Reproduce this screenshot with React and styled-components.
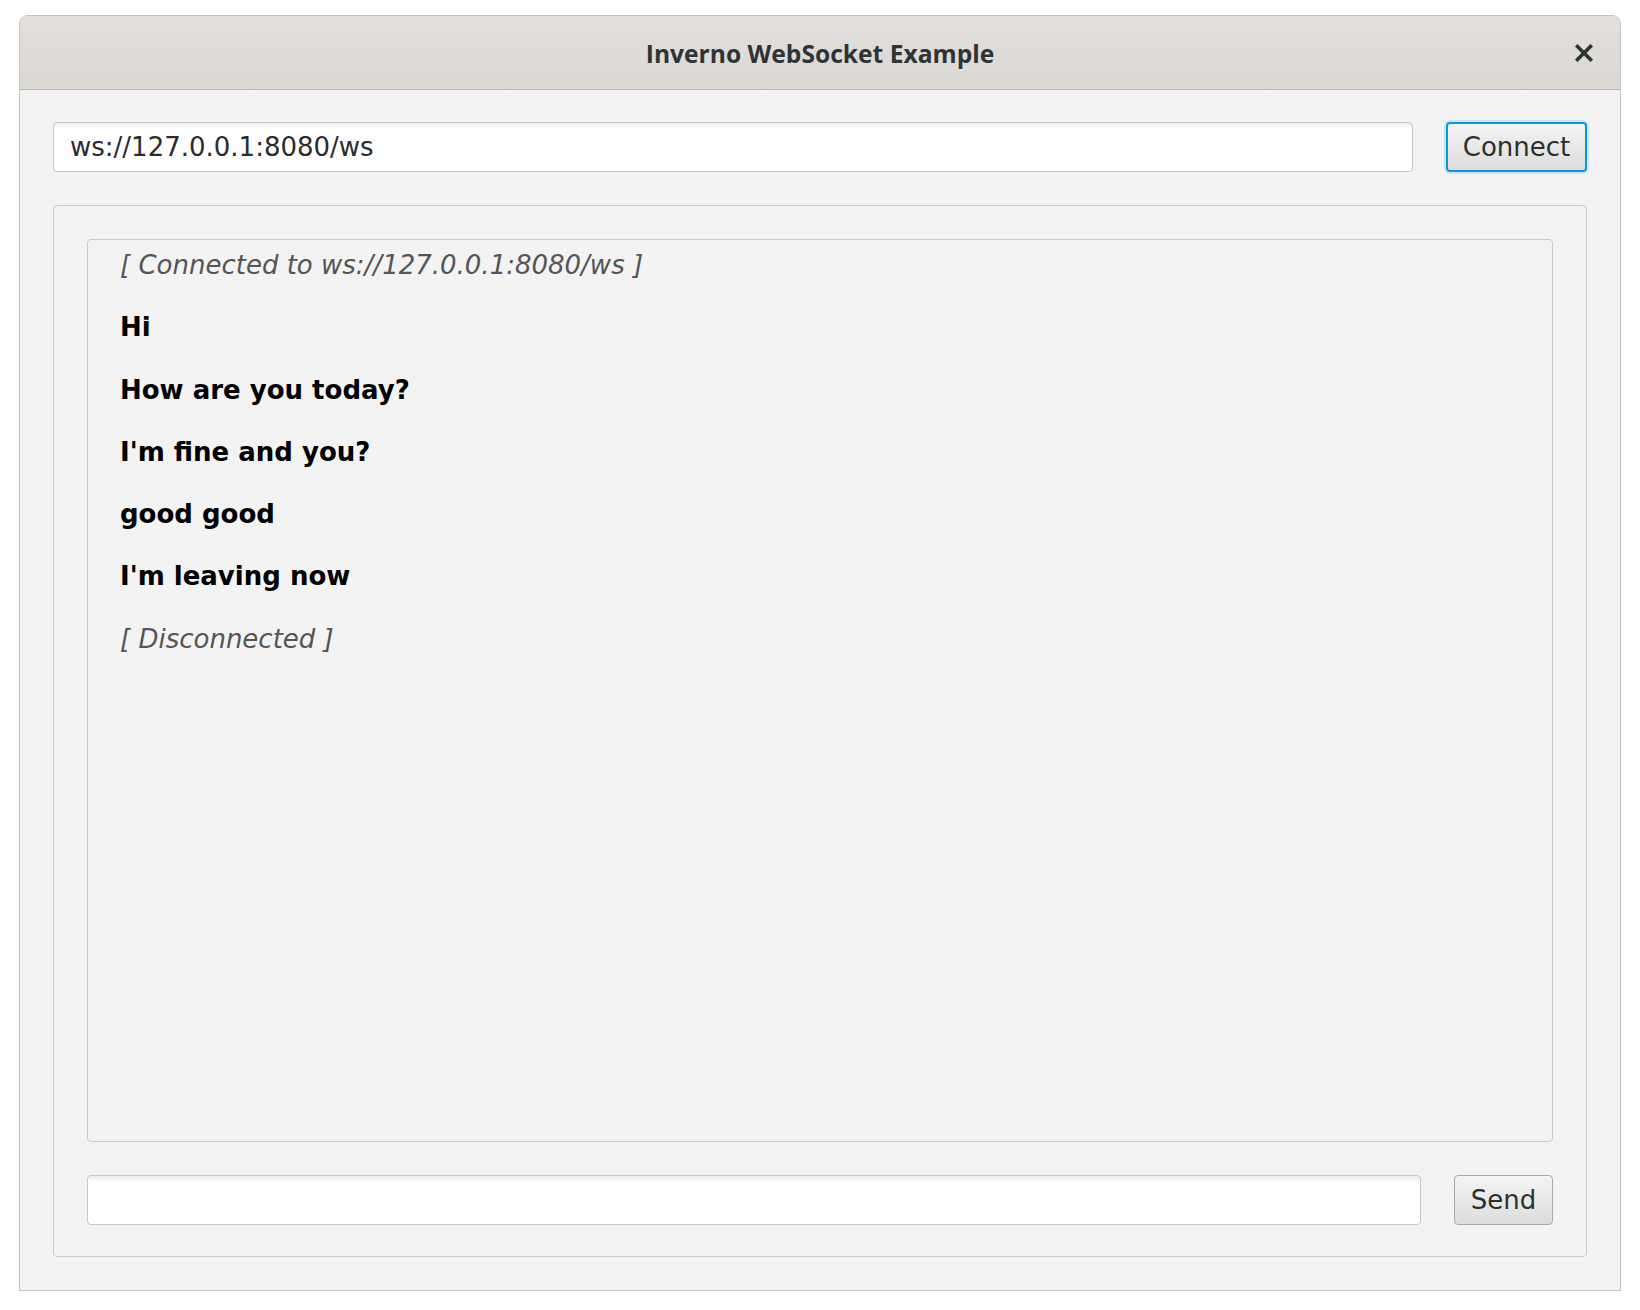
import React from 'react'
import styled, { createGlobalStyle } from 'styled-components'

const GlobalStyle = createGlobalStyle`
  html, body {
    margin: 0;
    padding: 0;
    background: #ffffff;
  }
  body {
    font-family: "DejaVu Sans", "Liberation Sans", sans-serif;
  }
`

const Page = styled.div`
  padding: 15px 19px 19px;
`

const Window = styled.div`
  height: 1276px;
  box-sizing: border-box;
  border: 1px solid #c3c0bd;
  border-radius: 9px 9px 0 0;
  background: #f3f3f3;
  display: flex;
  flex-direction: column;
  overflow: hidden;
`

const TitleBar = styled.div`
  height: 73px;
  flex: none;
  position: relative;
  display: flex;
  align-items: center;
  justify-content: center;
  background: linear-gradient(to bottom, #e2dfdc 0, #dcd8d4 100%);
  border-bottom: 1px solid #b9b4ae;
`

const Title = styled.div`
  font-family: "Open Sans", "Lato", sans-serif;
  font-weight: 700;
  font-size: 24.6px;
  color: #2e3436;
  margin-top: 2px;
`

// close glyph sits over the right end of the title bar
const CloseButton = styled.div`
  position: absolute;
  right: 27px;
  top: 28px;
  width: 18px;
  height: 18px;
  display: flex;
`

const Body = styled.div`
  flex: 1;
  display: flex;
  flex-direction: column;
  gap: 33px;
  padding: 32px 33px 33px;
`

const Row = styled.div`
  height: 50px;
  flex: none;
  display: flex;
  gap: 33px;
`

const TextInput = styled.div`
  flex: 1;
  box-sizing: border-box;
  border: 1px solid #c6c6c6;
  border-radius: 4px;
  background: linear-gradient(to bottom, #ececec 0, #ffffff 6px, #ffffff 100%);
  display: flex;
  align-items: center;
  padding: 0 16px;
  font-size: 26px;
  color: #2b2b2b;
`

const Button = styled.div`
  width: ${p => p.$width}px;
  flex: none;
  box-sizing: border-box;
  border-radius: 4px;
  border: ${p => (p.$focused ? '2px solid #0399d4' : '1px solid #a9a9a9')};
  box-shadow: ${p => (p.$focused ? '0 0 0 2px #c9e7f3' : 'none')};
  background: linear-gradient(to bottom, #f4f4f4 0, #e6e6e6 60%, #dcdcdc 100%);
  display: flex;
  align-items: center;
  justify-content: center;
  font-size: 26px;
  color: #2e2e2e;
`

const Panel = styled.div`
  flex: 1;
  display: flex;
  flex-direction: column;
  gap: 33px;
  padding: 33px 33px 31px;
  border: 1px solid #c9c9c9;
  border-radius: 4px;
`

const Log = styled.div`
  flex: 1;
  display: flex;
  flex-direction: column;
  gap: 32.3px;
  padding: 10px 32px;
  border: 1px solid #c9c9c9;
  border-radius: 4px;
`

const Line = styled.div`
  height: 30px;
  line-height: 30px;
  white-space: nowrap;
  font-size: 26px;
  font-style: ${p => (p.$status ? 'italic' : 'normal')};
  font-weight: ${p => (p.$status ? 400 : 700)};
  color: ${p => (p.$status ? '#555555' : '#000000')};
`

const lines = [
  { text: '[ Connected to ws://127.0.0.1:8080/ws ]', status: true },
  { text: 'Hi' },
  { text: 'How are you today?' },
  { text: "I'm fine and you?" },
  { text: 'good good' },
  { text: "I'm leaving now" },
  { text: '[ Disconnected ]', status: true },
]

export default function App() {
  return (
    <Page>
      <GlobalStyle />
      <Window>
        <TitleBar>
          <Title>Inverno WebSocket Example</Title>
          <CloseButton>
            <svg width="18" height="18" viewBox="0 0 18 18">
              <path d="M2.5 2.5 L15.5 15.5 M15.5 2.5 L2.5 15.5" stroke="#2e3436" strokeWidth="3.6" strokeLinecap="square" />
            </svg>
          </CloseButton>
        </TitleBar>
        <Body>
          <Row>
            <TextInput>ws://127.0.0.1:8080/ws</TextInput>
            <Button $width={141} $focused>Connect</Button>
          </Row>
          <Panel>
            <Log>
              {lines.map((l, i) => (
                <Line key={i} $status={l.status}>{l.text}</Line>
              ))}
            </Log>
            <Row>
              <TextInput />
              <Button $width={99}>Send</Button>
            </Row>
          </Panel>
        </Body>
      </Window>
    </Page>
  )
}
